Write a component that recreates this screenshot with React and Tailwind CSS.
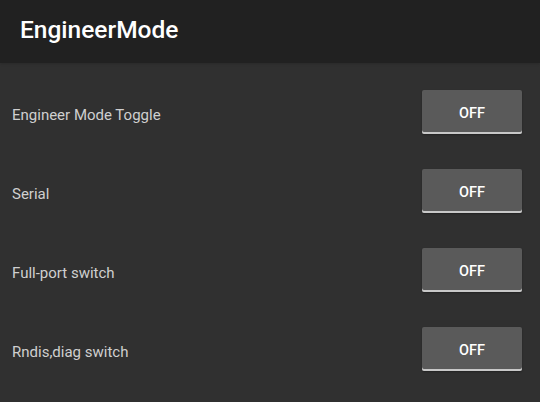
const rows = ["Engineer Mode Toggle", "Serial", "Full-port switch", "Rndis,diag switch"];

export default function App() {
  return (
    <div className="w-[540px] h-[402px] bg-[#303030] font-['Roboto',sans-serif] overflow-hidden">
      {/* Toolbar */}
      <div className="h-[63px] bg-[#212121] flex items-center px-5 shadow-sm">
        <h1 className="text-[24.5px] font-medium text-white pb-[2px]">EngineerMode</h1>
      </div>

      {/* Settings list */}
      <div className="flex flex-col gap-[35px] pt-[27px] pl-3 pr-[18px]">
        {rows.map((label) => (
          <div key={label} className="flex items-center justify-between h-[44px]">
            <span className="text-[15px] text-[#cfcfcf] pt-[6px]">{label}</span>
            <button className="w-[100px] h-[44px] pt-1 bg-[#5a5a5a] rounded-[2px] shadow-[inset_0_-2px_0_#c8c8c8,0_1px_2px_rgba(0,0,0,0.3)] text-white text-[14.5px] font-medium">
              OFF
            </button>
          </div>
        ))}
      </div>
    </div>
  );
}
